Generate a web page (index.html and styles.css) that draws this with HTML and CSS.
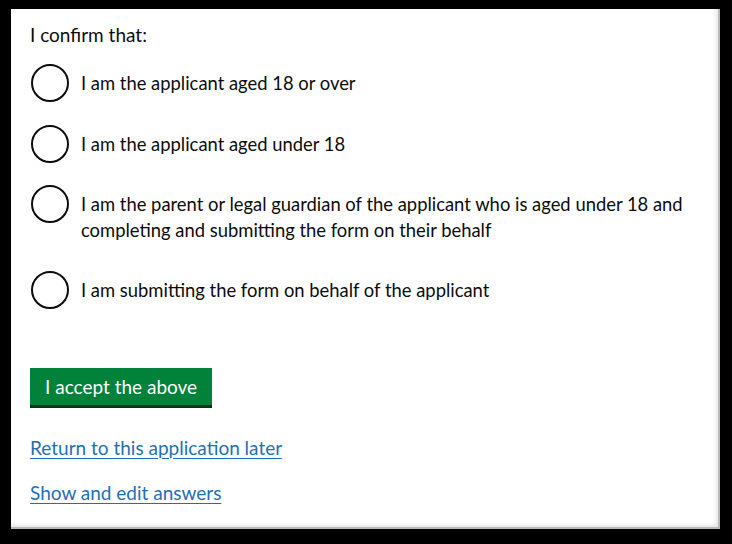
FILE: index.html
```html
<!DOCTYPE html>
<html lang="en">
<head>
<meta charset="utf-8">
<title>Declaration</title>
<link rel="stylesheet" href="styles.css">
</head>
<body>
<div class="panel">
  <p class="legend">I confirm that:</p>
  <div class="radios">
    <div class="radio"><span class="circle"></span><span class="label">I am the applicant aged 18 or over</span></div>
    <div class="radio"><span class="circle"></span><span class="label">I am the applicant aged under 18</span></div>
    <div class="radio"><span class="circle"></span><span class="label">I am the parent or legal guardian of the applicant who is aged under 18 and completing and submitting the form on their behalf</span></div>
    <div class="radio"><span class="circle"></span><span class="label">I am submitting the form on behalf of the applicant</span></div>
  </div>
  <button class="button" type="button">I accept the above</button>
  <a class="link first" href="#">Return to this application later</a>
  <a class="link" href="#">Show and edit answers</a>
</div>
</body>
</html>
```
FILE: styles.css
```css
html, body {
  margin: 0;
  background: #000;
}
body {
  padding: 9px 0 0 11px;
  font-family: Lato, "Liberation Sans", sans-serif;
  font-size: 19px;
  line-height: 25px;
  color: #0b0c0c;
}
.panel {
  box-sizing: border-box;
  width: 709px;
  height: 520px;
  background: #fff;
  border-right: 2px solid #b8b8b8;
  border-bottom: 2px solid #b8b8b8;
  box-shadow: inset -4px -4px 4px -2px #e6e6e6;
  padding: 13px 12px 0 19px;
  display: flex;
  flex-direction: column;
  align-items: flex-start;
}
.legend {
  margin: 0 0 17px 0;
}
.radios {
  display: flex;
  flex-direction: column;
  gap: 21px;
}
.radio {
  display: flex;
  align-items: flex-start;
  gap: 12px;
  padding-left: 1px;
}
.circle {
  flex: none;
  box-sizing: border-box;
  width: 38px;
  height: 38px;
  border: 2px solid #0b0c0c;
  border-radius: 50%;
}
.label {
  font-size: 18.4px;
  line-height: 25.5px;
  padding: 7px 0 7px 0;
  max-width: 620px;
}
.button {
  margin-top: 57px;
  font: inherit;
  color: #fff;
  background: #00823b;
  border: 0;
  padding: 6px 15px 6px 15px;
  box-shadow: 0 3px 0 #003618;
  cursor: pointer;
}
.link {
  color: #1d70b8;
  text-decoration: underline;
  text-decoration-thickness: 1px;
  text-underline-offset: 3px;
  margin-top: 20px;
}
.link.first {
  margin-top: 30px;
}
```
